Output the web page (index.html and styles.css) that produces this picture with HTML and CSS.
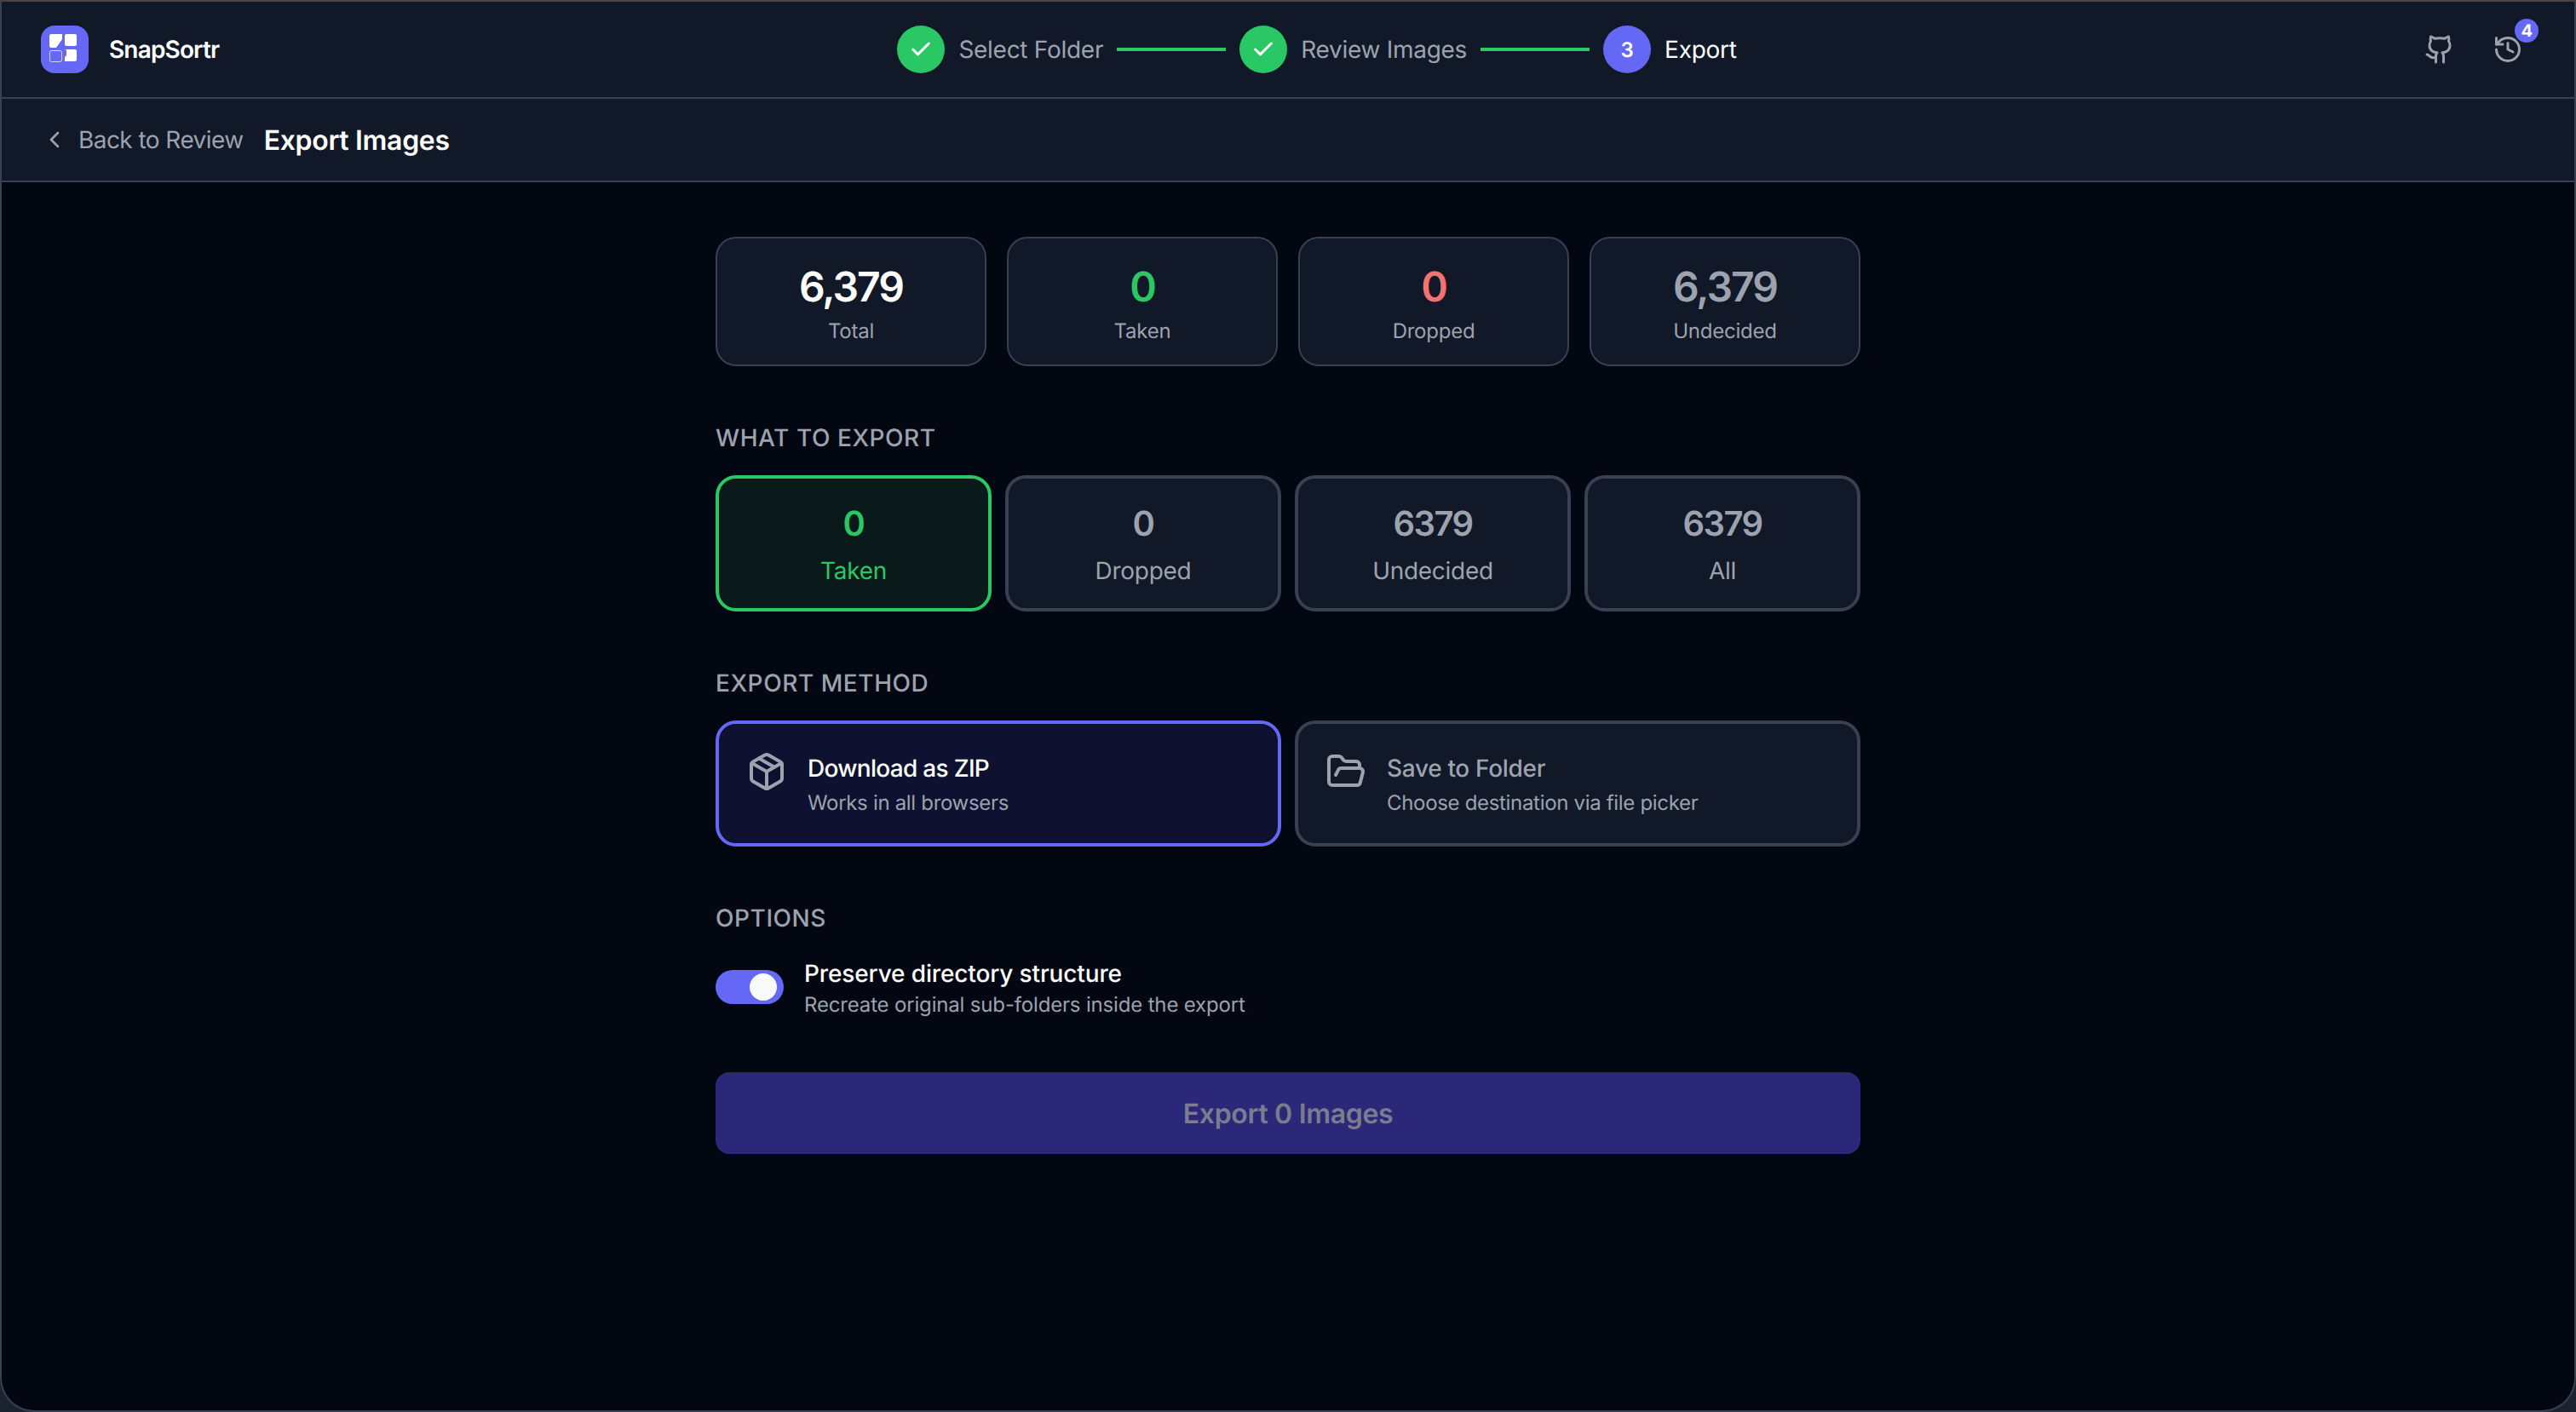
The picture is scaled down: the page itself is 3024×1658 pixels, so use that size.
FILE: index.html
```html
<!DOCTYPE html>
<html lang="en">
<head>
    <meta charset="UTF-8">
    <meta name="viewport" content="width=device-width, initial-scale=1.0">
    <title>SnapSortr</title>
    <link rel="stylesheet" href="styles.css">
</head>
<body>
    <div class="window">
        <header class="topbar">
            <div class="brand">
                <div class="logo">
                    <svg width="36" height="36" viewBox="0 0 36 36">
                        <path d="M2 0h13v6l-7 10H2a2 2 0 0 1-2-2V2a2 2 0 0 1 2-2z" fill="#fff"/>
                        <rect x="18" y="0" width="14" height="14" rx="2" fill="#fff"/>
                        <rect x="0.5" y="19.5" width="14" height="13" rx="2" fill="none" stroke="#d5d6fb" stroke-width="1"/>
                        <path d="M18 32v-5l2-2v-6l-2-1h12a2 2 0 0 1 2 2v10a2 2 0 0 1-2 2z" fill="#fff"/>
                    </svg>
                </div>
                <span class="brand-name">SnapSortr</span>
            </div>
            <nav class="steps">
                <div class="step">
                    <span class="step-dot done">
                        <svg class="icon" width="28" height="28" viewBox="0 0 24 24" stroke-width="2.6"><path d="M20 6 9 17l-5-5"/></svg>
                    </span>
                    <span class="step-name">Select Folder</span>
                </div>
                <div class="step-line"></div>
                <div class="step">
                    <span class="step-dot done">
                        <svg class="icon" width="28" height="28" viewBox="0 0 24 24" stroke-width="2.6"><path d="M20 6 9 17l-5-5"/></svg>
                    </span>
                    <span class="step-name">Review Images</span>
                </div>
                <div class="step-line"></div>
                <div class="step">
                    <span class="step-dot current">3</span>
                    <span class="step-name active">Export</span>
                </div>
            </nav>
            <div class="top-actions">
                <button class="icon-btn">
                    <svg class="icon" width="36" height="36" viewBox="0 0 24 24" stroke-width="2"><path d="M15 22v-4a4.8 4.8 0 0 0-1-3.5c3 0 6-2 6-5.5.08-1.25-.27-2.48-1-3.5.28-1.15.28-2.35 0-3.5 0 0-1 0-3 1.5-2.64-.5-5.36-.5-8 0C6 2 5 2 5 2c-.3 1.15-.3 2.35 0 3.5A5.403 5.403 0 0 0 4 9c0 3.5 3 5.5 6 5.5-.39.49-.68 1.05-.85 1.65-.17.6-.22 1.23-.15 1.85v4"/><path d="M9 18c-4.51 2-5-2-7-2"/></svg>
                </button>
                <button class="icon-btn">
                    <svg class="icon" width="36" height="36" viewBox="0 0 24 24" stroke-width="2"><path d="M3 12a9 9 0 1 0 9-9 9.75 9.75 0 0 0-6.74 2.74L3 8"/><path d="M3 3v5h5"/><path d="M12 7v5l4 2"/></svg>
                    <span class="badge">4</span>
                </button>
            </div>
        </header>

        <div class="subbar">
            <a class="back-link">
                <svg class="icon" width="32" height="32" viewBox="0 0 24 24" stroke-width="2"><path d="m15 18-6-6 6-6"/></svg>
                Back to Review
            </a>
            <h1>Export Images</h1>
        </div>

        <main class="content">
            <div class="stats">
                <div class="stat-card">
                    <div class="stat-value white">6,379</div>
                    <div class="stat-label">Total</div>
                </div>
                <div class="stat-card">
                    <div class="stat-value green">0</div>
                    <div class="stat-label">Taken</div>
                </div>
                <div class="stat-card">
                    <div class="stat-value red">0</div>
                    <div class="stat-label">Dropped</div>
                </div>
                <div class="stat-card">
                    <div class="stat-value">6,379</div>
                    <div class="stat-label">Undecided</div>
                </div>
            </div>

            <h2 class="section-title">WHAT TO EXPORT</h2>
            <div class="choices">
                <button class="choice selected">
                    <div class="choice-value">0</div>
                    <div class="choice-label">Taken</div>
                </button>
                <button class="choice">
                    <div class="choice-value">0</div>
                    <div class="choice-label">Dropped</div>
                </button>
                <button class="choice">
                    <div class="choice-value">6379</div>
                    <div class="choice-label">Undecided</div>
                </button>
                <button class="choice">
                    <div class="choice-value">6379</div>
                    <div class="choice-label">All</div>
                </button>
            </div>

            <h2 class="section-title">EXPORT METHOD</h2>
            <div class="methods">
                <button class="method selected">
                    <svg class="icon" width="48" height="48" viewBox="0 0 24 24" stroke-width="2"><path d="m7.5 4.27 9 5.15"/><path d="M21 8a2 2 0 0 0-1-1.73l-7-4a2 2 0 0 0-2 0l-7 4A2 2 0 0 0 3 8v8a2 2 0 0 0 1 1.73l7 4a2 2 0 0 0 2 0l7-4A2 2 0 0 0 21 16Z"/><path d="m3.3 7 8.7 5 8.7-5"/><path d="M12 22V12"/></svg>
                    <div>
                        <div class="method-name">Download as ZIP</div>
                        <div class="method-desc">Works in all browsers</div>
                    </div>
                </button>
                <button class="method">
                    <svg class="icon" width="48" height="48" viewBox="0 0 24 24" stroke-width="2"><path d="m6 14 1.5-2.9A2 2 0 0 1 9.24 10H20a2 2 0 0 1 1.94 2.5l-1.54 6a2 2 0 0 1-1.95 1.5H4a2 2 0 0 1-2-2V5a2 2 0 0 1 2-2h3.9a2 2 0 0 1 1.69.9l.81 1.2a2 2 0 0 0 1.67.9H18a2 2 0 0 1 2 2v2"/></svg>
                    <div>
                        <div class="method-name">Save to Folder</div>
                        <div class="method-desc">Choose destination via file picker</div>
                    </div>
                </button>
            </div>

            <h2 class="section-title">OPTIONS</h2>
            <div class="option">
                <span class="toggle"><span class="knob"></span></span>
                <div>
                    <div class="option-name">Preserve directory structure</div>
                    <div class="option-desc">Recreate original sub-folders inside the export</div>
                </div>
            </div>

            <button class="export-btn">Export 0 Images</button>
        </main>
    </div>
</body>
</html>
```

FILE: styles.css
```css
* {
    box-sizing: border-box;
}
html, body {
    height: 100%;
}
body {
    margin: 0;
    background-color: #1c2330;
    color: #fff;
    font-family: 'Inter', sans-serif;
    letter-spacing: -0.02em;
    text-rendering: geometricPrecision;
}
button {
    font-family: inherit;
    letter-spacing: inherit;
    text-rendering: inherit;
    cursor: pointer;
}
.icon {
    display: block;
    flex-shrink: 0;
    fill: none;
    stroke: #9ca3af;
    stroke-linecap: round;
    stroke-linejoin: round;
}
.window {
    height: 100%;
    display: flex;
    flex-direction: column;
    background-color: #030712;
    border: 2px solid #374151;
    border-top-color: #4a4444;
    border-radius: 0 0 40px 40px;
    overflow: hidden;
}
.topbar {
    height: 114px;
    display: flex;
    align-items: center;
    justify-content: space-between;
    padding: 0 44px 0 46px;
    background-color: #111827;
    border-bottom: 2px solid #374151;
}
.brand {
    min-width: 214px;
    display: flex;
    align-items: center;
    gap: 24px;
}
.logo {
    width: 56px;
    height: 56px;
    display: flex;
    align-items: center;
    justify-content: center;
    background-color: #6468f4;
    border-radius: 16px;
}
.brand-name {
    font-size: 28px;
    font-weight: 600;
    letter-spacing: -0.03em;
}
.steps {
    display: flex;
    align-items: center;
    gap: 16px;
}
.step {
    display: flex;
    align-items: center;
    gap: 16px;
}
.step-dot {
    width: 56px;
    height: 56px;
    display: flex;
    align-items: center;
    justify-content: center;
    border-radius: 50%;
    font-size: 24px;
    font-weight: 600;
}
.step-dot.done {
    background-color: #2ac765;
}
.step-dot.done .icon {
    stroke: #fff;
}
.step-dot.current {
    background-color: #6468f4;
}
.step-name {
    font-size: 28px;
    letter-spacing: -0.01em;
    color: #9ca3af;
}
.step-name.active {
    color: #fff;
}
.step-line {
    width: 128px;
    height: 4px;
    background-color: #2ac765;
}
.top-actions {
    display: flex;
    align-items: center;
    gap: 12px;
}
.icon-btn {
    position: relative;
    padding: 16px;
    background: none;
    border: none;
}
.badge {
    position: absolute;
    top: -2px;
    right: -2px;
    width: 28px;
    height: 28px;
    display: flex;
    align-items: center;
    justify-content: center;
    border-radius: 50%;
    background-color: #6468f4;
    color: #fff;
    font-size: 20px;
    font-weight: 700;
}
.subbar {
    height: 98px;
    display: flex;
    align-items: center;
    gap: 24px;
    padding: 0 46px;
    background-color: #111827;
    border-bottom: 2px solid #374151;
}
.back-link {
    display: flex;
    align-items: center;
    gap: 12px;
    font-size: 28px;
    letter-spacing: -0.02em;
    color: #9ca3af;
}
h1 {
    margin: 0;
    font-size: 32px;
    font-weight: 600;
}
.content {
    width: 1344px;
    margin: 0 auto;
    padding-top: 64px;
}
.stats {
    display: grid;
    grid-template-columns: repeat(4, 1fr);
    gap: 24px;
    margin-bottom: 64px;
}
.stat-card {
    height: 152px;
    padding-top: 29px;
    text-align: center;
    background-color: #111827;
    border: 2px solid #374151;
    border-radius: 24px;
}
.stat-value {
    font-size: 48px;
    line-height: 56px;
    font-weight: 600;
    letter-spacing: -0.04em;
    color: #9ca3af;
    margin-bottom: 8px;
}
.stat-value.white {
    color: #fff;
}
.stat-value.green {
    color: #2ac765;
}
.stat-value.red {
    color: #f87171;
}
.stat-label {
    font-size: 24px;
    line-height: 32px;
    letter-spacing: -0.01em;
    color: #9ca3af;
}
.section-title {
    margin: 0 0 24px;
    font-size: 28px;
    line-height: 40px;
    font-weight: 500;
    letter-spacing: 0.02em;
    color: #9ca3af;
}
.choices {
    display: grid;
    grid-template-columns: repeat(4, 1fr);
    gap: 16px;
    margin-bottom: 64px;
}
.choice {
    height: 160px;
    padding: 29px 0 24px;
    display: block;
    text-align: center;
    background-color: #111827;
    border: 4px solid #374151;
    border-radius: 24px;
    color: #9ca3af;
}
.choice.selected {
    background-color: #0a1a1a;
    border-color: #2ac765;
    color: #2ac765;
}
.choice-value {
    font-size: 40px;
    line-height: 48px;
    font-weight: 600;
    letter-spacing: -0.04em;
    margin-bottom: 11px;
}
.choice-label {
    font-size: 28px;
    line-height: 40px;
    letter-spacing: -0.01em;
}
.methods {
    display: grid;
    grid-template-columns: repeat(2, 1fr);
    gap: 16px;
    margin-bottom: 64px;
}
.method {
    height: 148px;
    display: flex;
    align-items: flex-start;
    gap: 24px;
    padding: 31px 32px 27px;
    text-align: left;
    background-color: #111827;
    border: 4px solid #374151;
    border-radius: 24px;
}
.method .icon {
    margin-top: 1px;
}
.method.selected {
    background-color: #0e1230;
    border-color: #6468f4;
}
.method-name {
    font-size: 28px;
    line-height: 42px;
    font-weight: 500;
    color: #9ca3af;
    margin-bottom: 4px;
}
.method.selected .method-name {
    color: #fff;
    letter-spacing: -0.025em;
}
.method-desc {
    font-size: 24px;
    line-height: 32px;
    color: #9ca3af;
}
.option {
    display: flex;
    align-items: center;
    gap: 24px;
    margin-bottom: 63px;
}
.toggle {
    width: 80px;
    height: 40px;
    display: flex;
    justify-content: flex-end;
    align-items: center;
    padding: 0 8px;
    background-color: #6468f4;
    border-radius: 20px;
}
.knob {
    width: 32px;
    height: 32px;
    background-color: #f8fafc;
    border-radius: 50%;
}
.option-name {
    font-size: 28px;
    line-height: 42px;
    font-weight: 500;
    letter-spacing: -0.005em;
}
.option-desc {
    font-size: 24px;
    line-height: 32px;
    letter-spacing: -0.007em;
    color: #9ca3af;
}
.export-btn {
    display: block;
    width: 100%;
    height: 96px;
    font-size: 32px;
    font-weight: 600;
    letter-spacing: -0.01em;
    color: #7b7c8e;
    background-color: #2b2879;
    border: none;
    border-radius: 16px;
}
```
